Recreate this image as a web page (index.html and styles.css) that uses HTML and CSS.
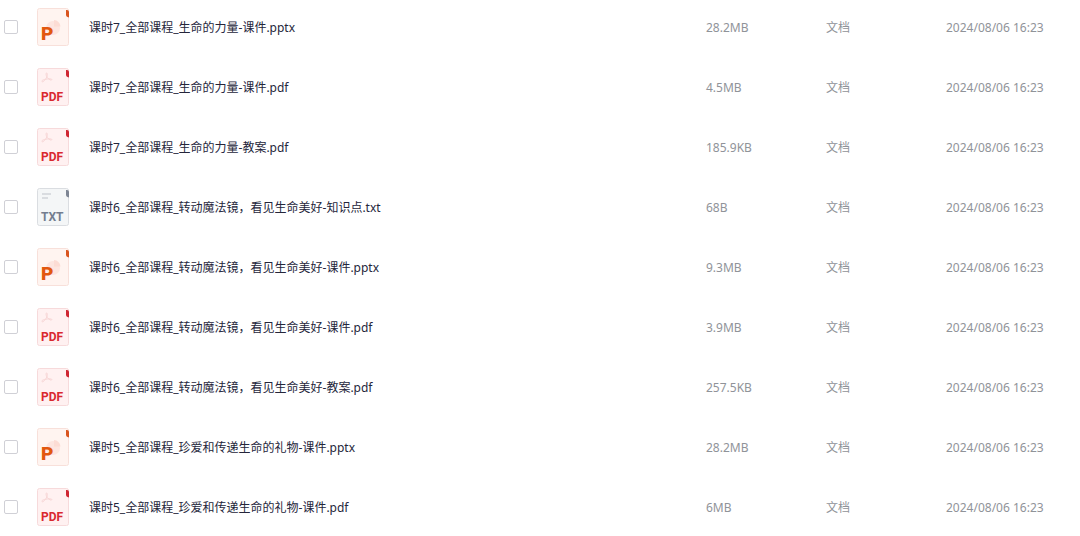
FILE: index.html
```
<!DOCTYPE html>
<html lang="zh-CN">
<head>
    <meta charset="UTF-8">
    <meta name="viewport" content="width=device-width, initial-scale=1.0">
    <title>全部课程</title>
    <link rel="stylesheet" href="styles.css">
</head>
<body>
    <!-- file type icons -->
    <svg class="sprite" aria-hidden="true">
        <symbol id="icon-ppt" viewBox="0 0 32 38">
            <rect x="0.5" y="0.5" width="31" height="37" rx="2" fill="#fff4f0" stroke="#f8e0da"/>
            <circle cx="16" cy="20" r="7" fill="#fde5df"/>
            <path d="M17 18.500V12a7 7 0 0 1 6.500 6.500z" fill="#fcdcd4"/>
            <path d="M29 2h1q2 0 2 2v5.500l-1.500-.5q-1.500-.5-1.500-2z" fill="#d9541e"/>
            <text class="icon-letter" x="4" y="32" fill="#e2580f">P</text>
        </symbol>
        <symbol id="icon-pdf" viewBox="0 0 32 38">
            <rect x="0.5" y="0.5" width="31" height="37" rx="2" fill="#fff1f1" stroke="#f7dadb"/>
            <path d="M9.500 5c1.500 0 .8 3.500-.5 5.500S6 14.500 5 13.500s3-3 9-2.500c1.500.2.8 1.500-.5 1C11 11 9 8 9 6c0-.6.200-1 .5-1z" fill="none" stroke="#f8d6d6"/>
            <path d="M29 2h1q2 0 2 2v5.500l-1.500-.5q-1.500-.5-1.500-2z" fill="#cf2733"/>
            <text class="icon-text" x="4" y="33" fill="#d9282f">PDF</text>
        </symbol>
        <symbol id="icon-txt" viewBox="0 0 32 38">
            <rect x="0.5" y="0.5" width="31" height="37" rx="2" fill="#f4f6f7" stroke="#dadde1"/>
            <path d="M5 6h9M5 10h6" stroke="#d0d4d9" stroke-width="1.500"/>
            <path d="M29 2h1q2 0 2 2v5.500l-1.500-.5q-1.500-.5-1.500-2z" fill="#7d8593"/>
            <text class="icon-text" x="4" y="33" fill="#737d8f">TXT</text>
        </symbol>
    </svg>

    <table class="file-list">
        <tbody>
            <tr>
                <td class="col-check"><input type="checkbox" id="file1"></td>
                <td class="col-icon"><svg class="icon"><use href="#icon-ppt"/></svg></td>
                <td class="col-name"><label for="file1">课时7_全部课程_生命的力量-课件.pptx</label></td>
                <td class="col-size">28.2MB</td>
                <td class="col-type">文档</td>
                <td class="col-date">2024/08/06 16:23</td>
            </tr>
            <tr>
                <td class="col-check"><input type="checkbox" id="file2"></td>
                <td class="col-icon"><svg class="icon"><use href="#icon-pdf"/></svg></td>
                <td class="col-name"><label for="file2">课时7_全部课程_生命的力量-课件.pdf</label></td>
                <td class="col-size">4.5MB</td>
                <td class="col-type">文档</td>
                <td class="col-date">2024/08/06 16:23</td>
            </tr>
            <tr>
                <td class="col-check"><input type="checkbox" id="file3"></td>
                <td class="col-icon"><svg class="icon"><use href="#icon-pdf"/></svg></td>
                <td class="col-name"><label for="file3">课时7_全部课程_生命的力量-教案.pdf</label></td>
                <td class="col-size">185.9KB</td>
                <td class="col-type">文档</td>
                <td class="col-date">2024/08/06 16:23</td>
            </tr>
            <tr>
                <td class="col-check"><input type="checkbox" id="file4"></td>
                <td class="col-icon"><svg class="icon"><use href="#icon-txt"/></svg></td>
                <td class="col-name"><label for="file4">课时6_全部课程_转动魔法镜，看见生命美好-知识点.txt</label></td>
                <td class="col-size">68B</td>
                <td class="col-type">文档</td>
                <td class="col-date">2024/08/06 16:23</td>
            </tr>
            <tr>
                <td class="col-check"><input type="checkbox" id="file5"></td>
                <td class="col-icon"><svg class="icon"><use href="#icon-ppt"/></svg></td>
                <td class="col-name"><label for="file5">课时6_全部课程_转动魔法镜，看见生命美好-课件.pptx</label></td>
                <td class="col-size">9.3MB</td>
                <td class="col-type">文档</td>
                <td class="col-date">2024/08/06 16:23</td>
            </tr>
            <tr>
                <td class="col-check"><input type="checkbox" id="file6"></td>
                <td class="col-icon"><svg class="icon"><use href="#icon-pdf"/></svg></td>
                <td class="col-name"><label for="file6">课时6_全部课程_转动魔法镜，看见生命美好-课件.pdf</label></td>
                <td class="col-size">3.9MB</td>
                <td class="col-type">文档</td>
                <td class="col-date">2024/08/06 16:23</td>
            </tr>
            <tr>
                <td class="col-check"><input type="checkbox" id="file7"></td>
                <td class="col-icon"><svg class="icon"><use href="#icon-pdf"/></svg></td>
                <td class="col-name"><label for="file7">课时6_全部课程_转动魔法镜，看见生命美好-教案.pdf</label></td>
                <td class="col-size">257.5KB</td>
                <td class="col-type">文档</td>
                <td class="col-date">2024/08/06 16:23</td>
            </tr>
            <tr>
                <td class="col-check"><input type="checkbox" id="file8"></td>
                <td class="col-icon"><svg class="icon"><use href="#icon-ppt"/></svg></td>
                <td class="col-name"><label for="file8">课时5_全部课程_珍爱和传递生命的礼物-课件.pptx</label></td>
                <td class="col-size">28.2MB</td>
                <td class="col-type">文档</td>
                <td class="col-date">2024/08/06 16:23</td>
            </tr>
            <tr>
                <td class="col-check"><input type="checkbox" id="file9"></td>
                <td class="col-icon"><svg class="icon"><use href="#icon-pdf"/></svg></td>
                <td class="col-name"><label for="file9">课时5_全部课程_珍爱和传递生命的礼物-课件.pdf</label></td>
                <td class="col-size">6MB</td>
                <td class="col-type">文档</td>
                <td class="col-date">2024/08/06 16:23</td>
            </tr>
        </tbody>
    </table>
</body>
</html>
```

FILE: styles.css
```
body {
    margin: 0;
    overflow: hidden;
    font-family: "Noto Sans", "Noto Sans CJK SC", sans-serif;
    font-size: 12px;
    line-height: 20px;
    color: #25263b;
    background-color: #fff;
}

.sprite {
    display: none;
}

.file-list {
    width: 100%;
    margin-top: -3px;
    border-collapse: collapse;
    table-layout: fixed;
}

.file-list td {
    box-sizing: border-box;
    height: 60px;
    padding: 2px 0 0;
    vertical-align: middle;
    white-space: nowrap;
    color: #909399;
}

.file-list .col-check {
    width: 37px;
    padding: 0 0 0 4px;
}

.file-list .col-icon {
    width: 52px;
    padding: 0;
}

.file-list .col-name {
    color: #25263b;
    overflow: hidden;
    text-overflow: ellipsis;
}

.file-list .col-size,
.file-list .col-type {
    width: 120px;
}

.file-list .col-date {
    width: 134px;
}

.col-check input {
    display: block;
    appearance: none;
    width: 14px;
    height: 14px;
    margin: 0;
    border: 1px solid #d0d0d6;
    border-radius: 2px;
    background-color: #fff;
    cursor: pointer;
}

.col-check input:checked {
    background-color: #06a7ff;
    border-color: #06a7ff;
}

.icon {
    display: block;
    width: 32px;
    height: 38px;
}

.icon-text {
    font: bold 12px "Roboto", sans-serif;
}

.icon-letter {
    font: 900 19px "Roboto", sans-serif;
}
```
